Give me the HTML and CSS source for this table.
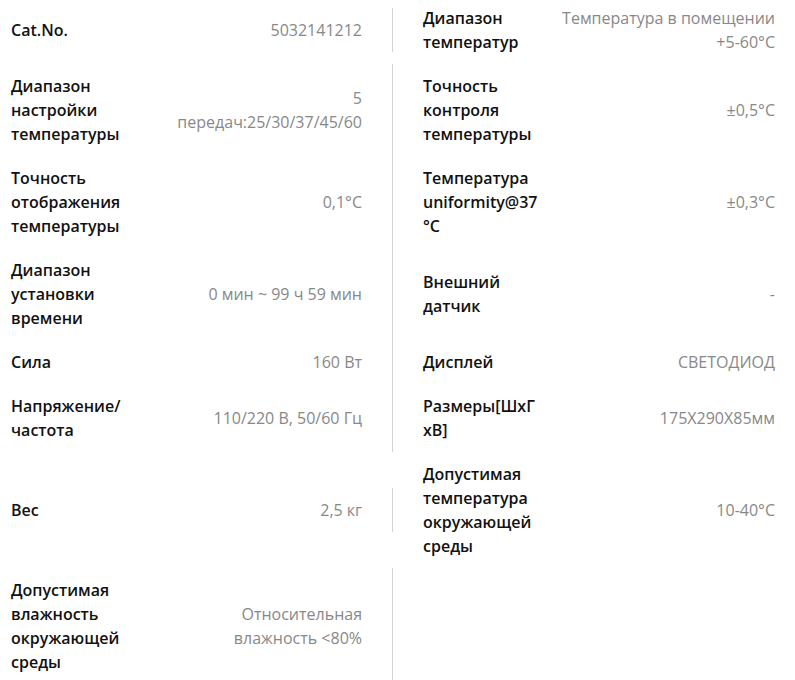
FILE: index.html
```html
<!DOCTYPE html>
<html lang="ru">
<head>
    <meta charset="UTF-8">
    <meta name="viewport" content="width=device-width, initial-scale=1.0">
    <title>Характеристики</title>
    <link rel="stylesheet" href="styles.css">
</head>
<body>
    <div class="specs">
        <div class="spec">
            <div class="spec-name">Cat.No.</div>
            <div class="spec-value">5032141212</div>
        </div>
        <div class="spec">
            <div class="spec-name">Диапазон температур</div>
            <div class="spec-value">Температура в помещении +5-60°C</div>
        </div>

        <div class="spec">
            <div class="spec-name">Диапазон настройки температуры</div>
            <div class="spec-value">5<br>передач:25/30/37/45/60</div>
        </div>
        <div class="spec">
            <div class="spec-name">Точность контроля температуры</div>
            <div class="spec-value">±0,5°C</div>
        </div>

        <div class="spec">
            <div class="spec-name">Точность отображения температуры</div>
            <div class="spec-value">0,1°C</div>
        </div>
        <div class="spec">
            <div class="spec-name">Температура uniformity@37°C</div>
            <div class="spec-value">±0,3°C</div>
        </div>

        <div class="spec">
            <div class="spec-name">Диапазон установки времени</div>
            <div class="spec-value">0 мин ~ 99 ч 59 мин</div>
        </div>
        <div class="spec">
            <div class="spec-name">Внешний датчик</div>
            <div class="spec-value">-</div>
        </div>

        <div class="spec">
            <div class="spec-name">Сила</div>
            <div class="spec-value">160 Вт</div>
        </div>
        <div class="spec">
            <div class="spec-name">Дисплей</div>
            <div class="spec-value">СВЕТОДИОД</div>
        </div>

        <div class="spec">
            <div class="spec-name">Напряжение/ частота</div>
            <div class="spec-value">110/220 В, 50/60 Гц</div>
        </div>
        <div class="spec">
            <div class="spec-name">Размеры[ШхГхВ]</div>
            <div class="spec-value">175X290X85мм</div>
        </div>

        <div class="spec">
            <div class="spec-name">Вес</div>
            <div class="spec-value">2,5 кг</div>
        </div>
        <div class="spec">
            <div class="spec-name">Допустимая температура окружающей среды</div>
            <div class="spec-value">10-40°C</div>
        </div>

        <div class="spec">
            <div class="spec-name">Допустимая влажность окружающей среды</div>
            <div class="spec-value">Относительная<br>влажность &lt;80%</div>
        </div>
    </div>
</body>
</html>
```

FILE: styles.css
```css
body {
    margin: 0;
    font-family: "Open Sans", Arial, sans-serif;
    font-size: 16px;
    line-height: 24px;
    background: #fff;
}
.specs {
    display: grid;
    grid-template-columns: 393px 1fr;
    align-items: center;
    margin-top: -4px;
}
.spec {
    display: flex;
    align-items: center;
    justify-content: space-between;
    gap: 12px;
    padding: 10px 20px 10px 30px;
}
.spec:nth-child(odd) {
    padding: 10px 30px 10px 11px;
    border-right: 1px solid #d3d3d3;
}
.spec-name {
    flex: 0 0 118px;
    font-weight: 600;
    color: #111;
    overflow-wrap: anywhere;
}
.spec-value {
    flex: 1;
    text-align: right;
    color: #888;
}
```
